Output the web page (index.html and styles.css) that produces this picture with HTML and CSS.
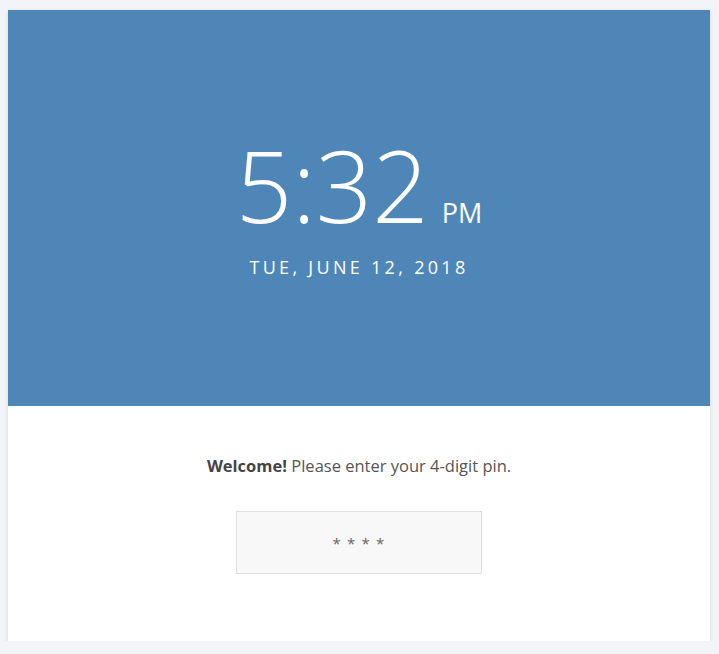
FILE: index.html
```html
<!DOCTYPE html>
<html>
<head>
<meta charset="utf-8">
<link rel="stylesheet" href="styles.css">
</head>
<body>
<div class="card">
  <div class="hero">
    <div class="clock">
      <span class="time">5:32</span><span class="ampm">PM</span>
    </div>
    <div class="date">TUE, JUNE 12, 2018</div>
  </div>
  <div class="login">
    <p class="welcome"><strong>Welcome!</strong> Please enter your 4-digit pin.</p>
    <div class="pin">* * * *</div>
  </div>
</div>
</body>
</html>
```
FILE: styles.css
```css
html, body {
  margin: 0;
  padding: 0;
  background: #f3f4f8;
  font-family: "Open Sans", "Noto Sans", sans-serif;
}
body {
  padding: 10px 9px 0 8px;
}
.card {
  background: #ffffff;
  box-shadow: 0 1px 4px rgba(0, 0, 0, 0.12);
}
.hero {
  background: #4f86b8;
  height: 396px;
  color: #ffffff;
  display: flex;
  flex-direction: column;
  align-items: center;
  box-sizing: border-box;
  padding-top: 125px;
}
.clock {
  display: flex;
  align-items: baseline;
  line-height: 1;
}
.time {
  font-size: 99px;
  font-weight: 300;
}
.ampm {
  font-size: 27px;
  font-weight: 400;
  margin-left: 13px;
}
.date {
  font-size: 18px;
  letter-spacing: 3.3px;
  margin-top: 21px;
  font-weight: 400;
}
.login {
  height: 235px;
  display: flex;
  flex-direction: column;
  align-items: center;
  box-sizing: border-box;
  padding-top: 49px;
}
.welcome {
  margin: 0;
  font-size: 16.5px;
  color: #555555;
  line-height: 22px;
}
.welcome strong {
  font-weight: 700;
  color: #444444;
}
.pin {
  margin-top: 34px;
  width: 246px;
  height: 63px;
  box-sizing: border-box;
  background: #f8f8f8;
  border: 1px solid #e0e0e0;
  display: flex;
  align-items: center;
  justify-content: center;
  font-size: 15px;
  color: #666666;
  letter-spacing: 1.2px;
}
```
